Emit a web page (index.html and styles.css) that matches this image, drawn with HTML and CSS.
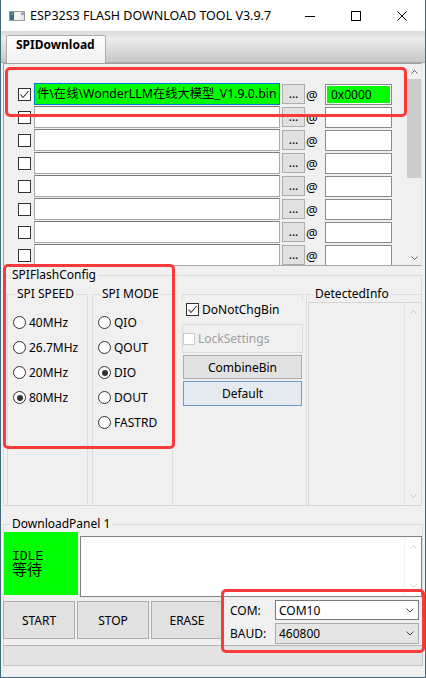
FILE: index.html
```html
<!DOCTYPE html>
<html lang="zh-CN">
<head>
    <meta charset="UTF-8">
    <meta name="viewport" content="width=device-width, initial-scale=1.0">
    <title>ESP32S3 FLASH DOWNLOAD TOOL V3.9.7</title>
    <link rel="stylesheet" href="styles.css">
</head>
<body>
<div class="window">
    <div class="titlebar">
        <svg class="app-icon" width="16" height="10" viewBox="0 0 16 10">
            <rect x="0.5" y="0.5" width="15" height="9" fill="#e6e6e6" stroke="#9c9c9c"/>
            <rect x="1" y="1" width="4" height="8" fill="#3d6b86"/>
            <rect x="2" y="2" width="2" height="2" fill="#6fa07a"/>
            <rect x="5.5" y="1" width="6" height="8" fill="#f5f5f5"/>
            <rect x="12" y="1.5" width="3" height="2.5" fill="#8ea6b8"/>
        </svg>
        <span class="title">ESP32S3 FLASH DOWNLOAD TOOL V3.9.7</span>
        <div class="controls">
            <span class="ctl"><svg width="10" height="10" viewBox="0 0 10 10"><path d="M0 5.5H10" stroke="#000"/></svg></span>
            <span class="ctl"><svg width="10" height="10" viewBox="0 0 10 10"><rect x="0.5" y="0.5" width="9" height="9" fill="none" stroke="#000"/></svg></span>
            <span class="ctl"><svg width="10" height="10" viewBox="0 0 10 10"><path d="M0.5 0.5L9.5 9.5M9.5 0.5L0.5 9.5" stroke="#000"/></svg></span>
        </div>
    </div>

    <div class="tabstrip">
        <div class="tab">SPIDownload</div>
    </div>

    <div class="page">
        <!-- bin file list -->
        <div class="filelist">
            <div class="rows">
                <div class="row">
                    <span class="check on"><svg width="11" height="11" viewBox="0 0 11 11"><polyline points="1.5,5.5 4,8.5 9.5,2" fill="none" stroke="#333" stroke-width="1.1"/></svg></span>
                    <div class="path active">件\在线\WonderLLM在线大模型_V1.9.0.bin</div>
                    <span class="browse">...</span>
                    <span class="at">@</span>
                    <div class="addr active">0x0000</div>
                </div>
                <div class="row"><span class="check"></span><div class="path"></div><span class="browse">...</span><span class="at">@</span><div class="addr"></div></div>
                <div class="row"><span class="check"></span><div class="path"></div><span class="browse">...</span><span class="at">@</span><div class="addr"></div></div>
                <div class="row"><span class="check"></span><div class="path"></div><span class="browse">...</span><span class="at">@</span><div class="addr"></div></div>
                <div class="row"><span class="check"></span><div class="path"></div><span class="browse">...</span><span class="at">@</span><div class="addr"></div></div>
                <div class="row"><span class="check"></span><div class="path"></div><span class="browse">...</span><span class="at">@</span><div class="addr"></div></div>
                <div class="row"><span class="check"></span><div class="path"></div><span class="browse">...</span><span class="at">@</span><div class="addr"></div></div>
                <div class="row"><span class="check"></span><div class="path"></div><span class="browse">...</span><span class="at">@</span><div class="addr"></div></div>
            </div>
            <div class="vscroll">
                <span class="arrow"><svg width="7" height="4" viewBox="0 0 7 4"><polyline points="0.5,3.5 3.5,0.5 6.5,3.5" fill="none" stroke="#606060"/></svg></span>
                <span class="thumb"></span>
                <span class="arrow end"><svg width="7" height="4" viewBox="0 0 7 4"><polyline points="0.5,0.5 3.5,3.5 6.5,0.5" fill="none" stroke="#606060"/></svg></span>
            </div>
        </div>

        <!-- flash settings -->
        <fieldset class="cfg">
            <legend>SPIFlashConfig</legend>
            <div class="cfg-body">
                <fieldset class="sub">
                    <legend>SPI SPEED</legend>
                    <div class="radios">
                        <div class="radio"><span class="dot"></span>40MHz</div>
                        <div class="radio"><span class="dot"></span>26.7MHz</div>
                        <div class="radio"><span class="dot"></span>20MHz</div>
                        <div class="radio"><span class="dot on"></span>80MHz</div>
                    </div>
                </fieldset>
                <fieldset class="sub mode">
                    <legend>SPI MODE</legend>
                    <div class="radios">
                        <div class="radio"><span class="dot"></span>QIO</div>
                        <div class="radio"><span class="dot"></span>QOUT</div>
                        <div class="radio"><span class="dot on"></span>DIO</div>
                        <div class="radio"><span class="dot"></span>DOUT</div>
                        <div class="radio"><span class="dot"></span>FASTRD</div>
                    </div>
                </fieldset>
                <div class="opts">
                    <div class="opt-frame"></div>
                    <div class="opt-row">
                        <span class="check on"><svg width="11" height="11" viewBox="0 0 11 11"><polyline points="1.5,5.5 4,8.5 9.5,2" fill="none" stroke="#333" stroke-width="1.1"/></svg></span>
                        DoNotChgBin
                    </div>
                    <div class="opt-box"><span class="check off"></span>LockSettings</div>
                    <div class="btn wide">CombineBin</div>
                    <div class="btn wide default">Default</div>
                </div>
                <fieldset class="sub info">
                    <legend>DetectedInfo</legend>
                    <div class="info-box">
                        <div class="soft-scroll">
                            <svg width="7" height="4" viewBox="0 0 7 4"><polyline points="0.5,3.5 3.5,0.5 6.5,3.5" fill="none" stroke="#c4c4c4"/></svg>
                            <svg width="7" height="4" viewBox="0 0 7 4"><polyline points="0.5,0.5 3.5,3.5 6.5,0.5" fill="none" stroke="#c4c4c4"/></svg>
                        </div>
                    </div>
                </fieldset>
            </div>
        </fieldset>

        <!-- download panel -->
        <fieldset class="dl">
            <legend>DownloadPanel 1</legend>
            <div class="dl-top">
                <div class="state">
                    <div class="state-en">IDLE</div>
                    <div class="state-cn">等待</div>
                </div>
                <div class="log">
                    <div class="soft-scroll">
                        <svg width="7" height="4" viewBox="0 0 7 4"><polyline points="0.5,3.5 3.5,0.5 6.5,3.5" fill="none" stroke="#cfcfcf"/></svg>
                        <svg width="7" height="4" viewBox="0 0 7 4"><polyline points="0.5,0.5 3.5,3.5 6.5,0.5" fill="none" stroke="#cfcfcf"/></svg>
                    </div>
                </div>
            </div>
            <div class="dl-bottom">
                <div class="actions">
                    <div class="btn big">START</div>
                    <div class="btn big">STOP</div>
                    <div class="btn big">ERASE</div>
                </div>
                <div class="port">
                    <span class="port-label">COM:</span>
                    <div class="select">COM10<svg width="8" height="5" viewBox="0 0 8 5"><polyline points="0.5,0.5 4,4 7.5,0.5" fill="none" stroke="#444"/></svg></div>
                    <span class="port-label">BAUD:</span>
                    <div class="select locked">460800<svg width="8" height="5" viewBox="0 0 8 5"><polyline points="0.5,0.5 4,4 7.5,0.5" fill="none" stroke="#444"/></svg></div>
                </div>
            </div>
        </fieldset>

        <div class="statusbar"></div>
    </div>

    <!-- red highlight frames -->
    <div class="mark mark-files"></div>
    <div class="mark mark-cfg"></div>
    <div class="mark mark-port"></div>
</div>
</body>
</html>
```

FILE: styles.css
```css
* { box-sizing: border-box; }
html, body {
    margin: 0;
    padding: 0;
}
body {
    width: 426px;
    height: 678px;
    overflow: hidden;
    background: #f0f0f0;
    font-family: "Noto Sans", "Noto Sans CJK SC", sans-serif;
    font-size: 12px;
    color: #000;
}
.window {
    position: relative;
    width: 426px;
    height: 678px;
    display: flex;
    flex-direction: column;
    border: 1px solid #45687f;
    border-top: none;
    background: #f0f0f0;
}

/* title bar */
.titlebar {
    height: 31px;
    flex: none;
    display: flex;
    align-items: center;
    background: #fff;
}
.app-icon { margin-left: 8px; }
.title {
    margin-left: 5px;
    font-size: 12.5px;
    white-space: nowrap;
}
.controls {
    margin-left: auto;
    display: flex;
    height: 100%;
}
.ctl {
    width: 46px;
    display: flex;
    align-items: center;
    justify-content: center;
}

/* tabs */
.tabstrip {
    height: 31px;
    flex: none;
    display: flex;
    align-items: flex-end;
    padding-left: 5px;
    background: linear-gradient(#d9d9d9 0, #ececec 25%, #c7c7c7 100%);
}
.tab {
    position: relative;
    z-index: 1;
    width: 100px;
    height: 28px;
    margin-bottom: -1px;
    padding-left: 9px;
    border: 1px solid #acacac;
    border-bottom: none;
    border-radius: 2px 2px 0 0;
    background: linear-gradient(#fdfdfd, #f0f0f0);
    font-weight: bold;
    line-height: 17px;
}

.page {
    flex: 1;
    display: flex;
    flex-direction: column;
    padding: 0 2px;
    border-top: 1px solid #a9a9a9;
    background: #f0f0f0;
}

/* file list */
.filelist {
    width: 419px;
    height: 203px;
    flex: none;
    display: flex;
    border: 1px solid #a0a0a0;
    border-right-color: #e3e3e3;
    border-bottom-color: #a8a8a8;
    overflow: hidden;
}
.rows {
    flex: 1;
    display: flex;
    flex-direction: column;
    gap: 1px;
    padding: 19px 0 0 14px;
}
.row {
    height: 22px;
    flex: none;
    display: flex;
    align-items: center;
}
.check {
    width: 13px;
    height: 13px;
    flex: none;
    display: flex;
    align-items: center;
    justify-content: center;
    border: 1px solid #333;
    background: #fff;
}
.check.off {
    width: 12px;
    height: 12px;
    border-color: #cccccc;
}
.row .check { margin-right: 3px; }
.path {
    width: 246px;
    height: 22px;
    padding: 0 2px;
    border: 1px solid #a9a9a9;
    border-top-color: #7a7a7a;
    background: #fff;
    font-size: 12.3px;
    line-height: 20px;
    white-space: nowrap;
    overflow: hidden;
}
.path.active {
    border-color: #0078d7;
    background: #00ff00;
}
.browse {
    width: 23px;
    height: 20px;
    margin-left: 2px;
    border: 1px solid #adadad;
    background: #e1e1e1;
    text-align: center;
    line-height: 18px;
}
.at {
    width: 20px;
    padding: 2px 0 0 1px;
    font-size: 13px;
}
.addr {
    width: 67px;
    height: 21px;
    padding-left: 4px;
    border: 1px solid #8a8a8a;
    background: #fff;
    line-height: 19px;
}
.addr.active {
    background: #00ff00;
    box-shadow: inset 0 0 0 1px #fff;
    padding-left: 5px;
}
.vscroll {
    width: 15px;
    flex: none;
    display: flex;
    flex-direction: column;
}
.arrow {
    height: 15px;
    flex: none;
    display: flex;
    align-items: center;
    justify-content: center;
    padding-left: 1px;
}
.arrow.end { margin-top: auto; }
.thumb {
    width: 14px;
    height: 99px;
    margin-left: 1px;
    background: #cdcdcd;
}

/* group boxes */
fieldset {
    margin: 0;
    padding: 0;
    min-width: 0;
    border: 1px solid #dcdcdc;
}
legend {
    padding: 0 2px;
    line-height: 16px;
}
.cfg {
    width: 419px;
    height: 239px;
    flex: none;
    margin-top: 1px;
    padding: 3px 0 0 3px;
    border-bottom-color: #d5d5d5;
}
.cfg > legend { margin-left: 3px; }
.cfg-body {
    height: 219px;
    display: flex;
}
.sub {
    width: 81px;
    height: 219px;
    flex: none;
    padding-left: 5px;
    border-bottom: none;
}
.sub > legend { margin-left: 2px; }
.sub.mode { margin-left: 4px; }
.radios {
    margin-top: 8px;
    display: flex;
    flex-direction: column;
}
.radio {
    height: 25px;
    display: flex;
    align-items: center;
    gap: 3px;
}
.dot {
    width: 13px;
    height: 13px;
    flex: none;
    display: flex;
    align-items: center;
    justify-content: center;
    border: 1px solid #333;
    border-radius: 50%;
    background: #fff;
}
.dot.on::after {
    content: "";
    width: 6px;
    height: 6px;
    border-radius: 50%;
    background: #333;
}

.opts {
    width: 121px;
    flex: none;
    margin-left: 9px;
    padding-top: 8px;
}
.opt-frame {
    height: 7px;
    border: 1px solid #dcdcdc;
    border-bottom: none;
}
.opt-row {
    height: 16px;
    margin-bottom: 7px;
    padding-left: 4px;
    display: flex;
    align-items: center;
    gap: 3px;
}
.opt-box {
    height: 29px;
    display: flex;
    align-items: center;
    gap: 3px;
    border: 1px solid #dcdcdc;
    color: #a0a0a0;
}
.btn {
    display: flex;
    align-items: center;
    justify-content: center;
    border: 1px solid #adadad;
    background: #e1e1e1;
}
.btn.wide {
    width: 119px;
    height: 24px;
    margin: 2px 0 0 1px;
}
.btn.default {
    height: 25px;
    border-color: #6b9bcc;
    background: #e4eaef;
}

.sub.info {
    width: 115px;
    margin-left: 3px;
    padding-left: 0;
    border-right: none;
}
.sub.info > legend { margin-left: 6px; }
.info-box {
    width: 113px;
    height: 203px;
    margin-left: 1px;
    display: flex;
    justify-content: flex-end;
    border: 1px solid #d6d6d6;
    border-right: none;
    border-bottom: none;
}
.soft-scroll {
    width: 17px;
    display: flex;
    flex-direction: column;
    align-items: center;
    justify-content: space-between;
    padding: 7px 0 7px 1px;
    border-left: 1px solid #e4e4e4;
}

/* download panel */
.dl {
    width: 420px;
    height: 129px;
    flex: none;
    margin-top: 10px;
    border-bottom: none;
}
.dl > legend { margin-left: 6px; }
.dl-top {
    display: flex;
    align-items: flex-start;
}
.state {
    width: 74px;
    height: 63px;
    padding-left: 8px;
    display: flex;
    flex-direction: column;
    justify-content: center;
    background: #00ff00;
    font-family: "Liberation Mono", "Noto Sans CJK SC", monospace;
    line-height: 15px;
}
.state-en { font-size: 13px; }
.state-cn { font-size: 15px; }
.log {
    width: 342px;
    height: 61px;
    margin: 4px 0 0 2px;
    display: flex;
    justify-content: flex-end;
    border: 1px solid #828282;
    background: #fff;
}
.log .soft-scroll {
    padding: 8px 0 8px 1px;
    border-left-color: #f2f2f2;
}
.dl-bottom {
    display: flex;
    margin-top: 1px;
}
.actions {
    display: flex;
    gap: 2px;
    margin: 3px 0 0 -1px;
}
.btn.big {
    width: 72px;
    height: 38px;
}
.port {
    display: grid;
    grid-template-columns: 45px 144px;
    row-gap: 3px;
    align-items: center;
    padding: 2px 0 0 7px;
}
.select {
    height: 20px;
    display: flex;
    align-items: center;
    justify-content: space-between;
    padding: 0 4px 0 3px;
    border: 1px solid #7a7a7a;
    background: #fff;
}
.select.locked {
    height: 21px;
    border-color: #adadad;
    background: #e5e5e5;
}

.statusbar {
    width: 420px;
    height: 21px;
    flex: none;
    border: 1px solid #c3c3c3;
    border-top-color: #b4b4b4;
    background: #e4e4e4;
}

/* highlight frames drawn over the form */
.mark {
    position: absolute;
    border: 3px solid #fa3a3a;
    border-radius: 5px;
    pointer-events: none;
}
.mark-files { left: 4px; top: 67px; width: 402px; height: 50px; }
.mark-cfg { left: 2px; top: 264px; width: 172px; height: 185px; }
.mark-port { left: 220px; top: 589px; width: 204px; height: 64px; }
```
